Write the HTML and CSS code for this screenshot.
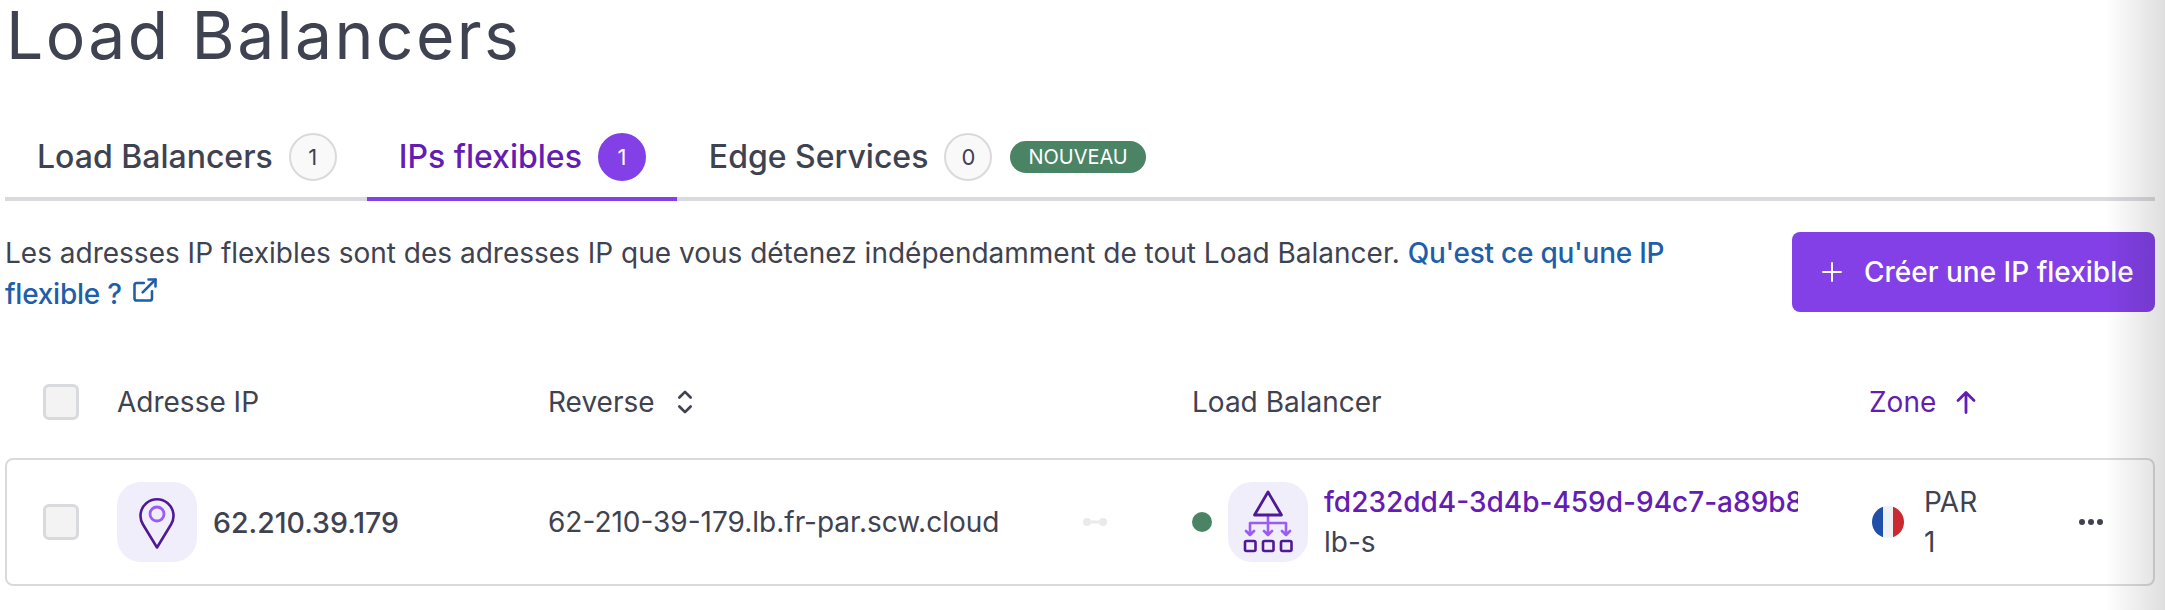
FILE: index.html
```html
<!DOCTYPE html>
<html lang="fr">
<head>
    <meta charset="UTF-8">
    <title>Load Balancers</title>
    <link rel="stylesheet" href="styles.css">
</head>
<body>
<div class="page">
    <h1 class="title">Load Balancers</h1>

    <div class="tabs">
        <div class="tab">Load Balancers <span class="count">1</span></div>
        <div class="tab active">IPs flexibles <span class="count">1</span></div>
        <div class="tab">Edge Services <span class="count">0</span> <span class="pill">NOUVEAU</span></div>
    </div>

    <div class="intro">
        <p class="intro-text">Les adresses IP flexibles sont des adresses IP que vous détenez indépendamment de tout Load Balancer. <a class="doc-link" href="#">Qu'est ce qu'une IP flexible&nbsp;?
            <svg class="ext-icon" viewBox="0 0 24 24" fill="none" stroke="currentColor" stroke-width="2.2" stroke-linecap="round" stroke-linejoin="round"><path d="M18 13v6a2 2 0 0 1-2 2H5a2 2 0 0 1-2-2V8a2 2 0 0 1 2-2h6"/><path d="M15 3h6v6"/><path d="M10 14 21 3"/></svg></a></p>
        <button class="create-btn" type="button">
            <svg class="plus-icon" viewBox="0 0 20 20" fill="none" stroke="currentColor" stroke-width="2" stroke-linecap="round"><path d="M10 1v18M1 10h18"/></svg>
            Créer une IP flexible
        </button>
    </div>

    <div class="table-head row-grid">
        <span class="checkbox"></span>
        <span>Adresse IP</span>
        <span class="sortable">Reverse
            <svg class="sort-icon" viewBox="0 0 16 24" fill="none" stroke="currentColor" stroke-width="2.4" stroke-linecap="round" stroke-linejoin="round"><path d="M3 8l5-5 5 5M3 16l5 5 5-5"/></svg>
        </span>
        <span>Load Balancer</span>
        <span class="sortable sorted">Zone
            <svg class="arrow-icon" viewBox="0 0 24 24" fill="none" stroke="currentColor" stroke-width="2.8" stroke-linecap="round" stroke-linejoin="round"><path d="M12 22V3M4 10l8-8 8 8"/></svg>
        </span>
    </div>

    <div class="card row-grid">
        <span class="checkbox"></span>
        <div class="cell">
            <div class="icon-box">
                <svg viewBox="0 0 80 80" fill="none">
                    <path d="M40 65.5 26 42.5A16.5 16.5 0 1 1 54 42.5Z" stroke="#4f1a93" stroke-width="2.6" stroke-linejoin="round"/>
                    <circle cx="40" cy="32" r="7" stroke="#9a5cf5" stroke-width="2.8"/>
                </svg>
            </div>
            <span class="ip">62.210.39.179</span>
        </div>
        <div class="cell reverse">
            <span class="reverse-text">62-210-39-179.lb.fr-par.scw.cloud</span>
            <svg class="link-icon" viewBox="0 0 24 12"><circle cx="4" cy="6" r="4"/><circle cx="20" cy="6" r="4"/><rect x="4" y="4.5" width="16" height="3"/></svg>
        </div>
        <div class="cell">
            <span class="dot"></span>
            <div class="icon-box">
                <svg viewBox="0 0 80 80" fill="none" stroke-linecap="round" stroke-linejoin="round">
                    <path d="M40 33V41M22 53V41H58V53M40 41V53M18 49l4 4 4-4M36 49l4 4 4-4M54 49l4 4 4-4" stroke="#9a5cf5" stroke-width="2.6"/>
                    <path d="M40 10 26.500 33H53.500Z" stroke="#4f1a93" stroke-width="2.8"/>
                    <rect x="17" y="59" width="10.500" height="10" rx="1.500" stroke="#4f1a93" stroke-width="2.6"/>
                    <rect x="35" y="59" width="10.500" height="10" rx="1.500" stroke="#4f1a93" stroke-width="2.6"/>
                    <rect x="53" y="59" width="10.500" height="10" rx="1.500" stroke="#4f1a93" stroke-width="2.6"/>
                </svg>
            </div>
            <div class="lb-info">
                <a class="lb-id" href="#">fd232dd4-3d4b-459d-94c7-a89b8</a>
                <span>lb-s</span>
            </div>
        </div>
        <div class="cell zone">
            <span class="flag"></span>
            <div class="zone-name"><span>PAR</span><span>1</span></div>
            <span class="more"><i></i><i></i><i></i></span>
        </div>
    </div>
</div>
<div class="edge-shade"></div>
</body>
</html>
```

FILE: styles.css
```css
html, body {
    margin: 0;
    height: 100%;
    overflow: hidden;
    background-color: #fff;
}
body {
    font-family: Inter, "Liberation Sans", sans-serif;
    color: #3f4250;
}
.page {
    padding: 0 10px 0 5px;
}
.title {
    margin: 0;
    padding-left: 1px;
    font-size: 66px;
    line-height: 70px;
    font-weight: 400;
    letter-spacing: 2.4px;
}

.tabs {
    display: flex;
    margin-top: 61px;
    border-bottom: 4px solid #d9dadd;
    height: 66px;
}
.tab {
    display: flex;
    align-items: center;
    gap: 16px;
    height: 70px;
    padding: 0 31px 19px 32px;
    box-sizing: border-box;
    font-size: 32px;
    font-weight: 500;
    margin-bottom: -4px;
}
.tab:first-child {
    padding-right: 30px;
}
.tab.active {
    color: #641cb3;
    border-bottom: 4px solid #8240e6;
    padding-bottom: 15px;
}
.count {
    display: flex;
    align-items: center;
    justify-content: center;
    width: 48px;
    height: 48px;
    box-sizing: border-box;
    border: 2px solid #d9dadd;
    border-radius: 50%;
    background-color: #f9f9fa;
    font-size: 22px;
    font-weight: 400;
}
.active .count {
    background-color: #8240e6;
    border-color: #8240e6;
    color: #fff;
}
.pill {
    display: flex;
    align-items: center;
    height: 32px;
    padding: 0 18px;
    margin-left: 2px;
    border-radius: 16px;
    background-color: #4a8465;
    color: #fff;
    font-size: 20px;
    font-weight: 400;
}

.intro {
    display: flex;
    justify-content: space-between;
    align-items: flex-start;
    margin-top: 31px;
}
.intro-text {
    width: 1680px;
    margin: 1px 0 0;
    font-size: 28px;
    line-height: 41px;
}
.doc-link {
    color: #1f5ea8;
    font-weight: 500;
    letter-spacing: -0.25px;
    text-decoration: none;
}
.ext-icon {
    width: 28px;
    height: 28px;
    margin-left: 2px;
}
.create-btn {
    display: flex;
    align-items: center;
    gap: 22px;
    height: 80px;
    width: 363px;
    padding: 0 0 0 30px;
    border: none;
    border-radius: 8px;
    background-color: #8240e6;
    color: #fff;
    font-family: inherit;
    font-size: 28px;
    font-weight: 500;
    white-space: nowrap;
}
.plus-icon {
    width: 20px;
    height: 20px;
}

.row-grid {
    display: grid;
    grid-template-columns: 74px 431px 644px 677px 1fr;
    align-items: center;
    padding-left: 38px;
}
.table-head {
    margin-top: 69px;
    height: 36px;
    font-size: 28px;
}
.sortable {
    display: flex;
    align-items: center;
    gap: 18px;
}
.sorted {
    color: #641cb3;
}
.sort-icon {
    width: 18px;
    height: 28px;
    margin-left: 3px;
}
.arrow-icon {
    width: 24px;
    height: 25px;
}
.checkbox {
    display: block;
    width: 36px;
    height: 36px;
    box-sizing: border-box;
    border: 3px solid #d9dadd;
    border-radius: 6px;
    background-color: #f3f3f4;
}

.card {
    margin-top: 38px;
    height: 128px;
    box-sizing: border-box;
    padding-left: 36px;
    border: 2px solid #d9dadd;
    border-radius: 8px;
}
.cell {
    display: flex;
    align-items: center;
}
.icon-box {
    flex: none;
    width: 80px;
    height: 80px;
    border-radius: 24px;
    background-color: #f1eefc;
}
.icon-box svg {
    display: block;
}
.ip {
    margin-left: 16px;
    font-size: 28.500px;
    font-weight: 500;
}
.reverse {
    font-size: 28px;
}
.reverse-text {
    width: 535px;
    white-space: nowrap;
}
.link-icon {
    width: 24px;
    height: 12px;
    fill: #e9eaeb;
}
.dot {
    flex: none;
    width: 20px;
    height: 20px;
    margin-right: 16px;
    border-radius: 50%;
    background-color: #4a8465;
}
.lb-info {
    display: flex;
    flex-direction: column;
    width: 474px;
    margin-left: 16px;
    overflow: hidden;
    font-size: 28px;
    line-height: 40px;
    white-space: nowrap;
}
.lb-id {
    color: #641cb3;
    font-weight: 500;
    text-decoration: none;
}
.zone {
    font-size: 28px;
}
.flag {
    flex: none;
    width: 32px;
    height: 32px;
    margin-left: 3px;
    border-radius: 50%;
    background: linear-gradient(90deg, #1f4fa8 0 33%, #eff0f4 33% 67%, #c9292f 67%);
}
.zone-name {
    display: flex;
    flex-direction: column;
    margin-left: 20px;
    line-height: 40px;
}
.more {
    display: flex;
    gap: 3px;
    margin-left: 102px;
}
.more i {
    width: 6px;
    height: 6px;
    border-radius: 50%;
    background-color: #3f4250;
}

/* shadow of the neighbouring panel */
.edge-shade {
    position: absolute;
    top: 0;
    right: 0;
    bottom: 0;
    width: 60px;
    background: linear-gradient(90deg, rgba(0, 0, 0, 0), rgba(0, 0, 0, 0.13));
    pointer-events: none;
}
```
